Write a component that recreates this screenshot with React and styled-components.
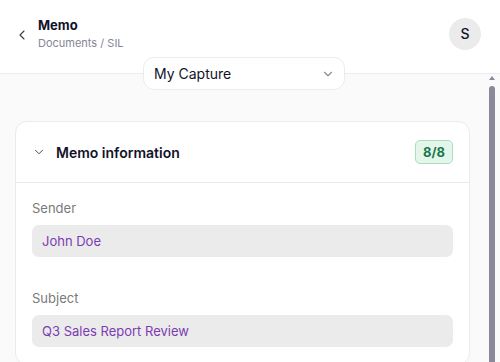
import styled, { createGlobalStyle } from "styled-components";
import { ChevronLeft, ChevronDown } from "lucide-react";

const GlobalStyle = createGlobalStyle`
  * { box-sizing: border-box; }
  html, body { margin: 0; padding: 0; }
  body {
    font-family: Inter, "Noto Sans", sans-serif;
    background: #fafafa;
    color: #14142b;
  }
`;

const Page = styled.div`
  height: 100vh;
  display: flex;
  flex-direction: column;
`;

const Header = styled.header`
  position: relative;
  height: 74px;
  flex-shrink: 0;
  background: #fff;
  border-bottom: 1px solid #ececec;
  display: flex;
  align-items: center;
  padding: 0 19px 6px 14px;
  z-index: 2;
`;

const BackButton = styled.button`
  all: unset;
  display: flex;
  align-items: center;
  color: #3a3a4a;
  margin-right: 8px;
  margin-top: 3px;
`;

const TitleBlock = styled.div`
  flex: 1;
  display: flex;
  flex-direction: column;
  gap: 3px;
`;

const Title = styled.h1`
  margin: 0;
  font-size: 13px;
  font-weight: 700;
  line-height: 16px;
  color: #12122a;
`;

const Crumbs = styled.span`
  font-size: 11px;
  line-height: 14px;
  color: #858596;
`;

const Avatar = styled.div`
  width: 32px;
  height: 32px;
  border-radius: 50%;
  background: #ebebeb;
  display: flex;
  align-items: center;
  justify-content: center;
  font-size: 14px;
  font-weight: 500;
  color: #12122a;
`;

const Select = styled.button`
  all: unset;
  position: absolute;
  left: 143px;
  bottom: -17px;
  width: 202px;
  height: 33px;
  box-sizing: border-box;
  background: #fff;
  border: 1px solid #ececec;
  border-radius: 11px;
  display: flex;
  align-items: center;
  justify-content: space-between;
  padding: 0 9px 0 10px;
  font-size: 14px;
  color: #12122a;
  svg { color: #8d8d99; }
`;

const Body = styled.div`
  flex: 1;
  min-height: 0;
  display: flex;
`;

const Scroll = styled.main`
  flex: 1;
  overflow-y: auto;
  padding: 47px 15px 0;
`;

const ScrollRail = styled.div`
  width: 15px;
  flex-shrink: 0;
  display: flex;
  flex-direction: column;
  padding: 2px 5px 0 4px;
  background: #fafafa;
`;

const ArrowUp = styled.div`
  width: 0;
  height: 0;
  border-left: 3px solid transparent;
  border-right: 3px solid transparent;
  border-bottom: 4px solid #8a889b;
  margin-bottom: 6px;
`;

const Thumb = styled.div`
  flex: 1;
  width: 6px;
  background: #8a889b;
  border-radius: 3px 3px 0 0;
`;

const Card = styled.section`
  background: #fff;
  border: 1px solid #ebebeb;
  border-radius: 12px;
`;

const CardHead = styled.div`
  height: 61px;
  display: flex;
  align-items: center;
  gap: 10px;
  padding: 0 16px 0 16px;
  border-bottom: 1px solid #ebebeb;
  svg { color: #3a3a4a; }
`;

const CardTitle = styled.h2`
  margin: 0;
  flex: 1;
  font-size: 14px;
  font-weight: 600;
  color: #12122a;
`;

const Badge = styled.span`
  height: 24px;
  padding: 0 7px;
  display: flex;
  align-items: center;
  border-radius: 5px;
  background: #e4f6ea;
  border: 1px solid #a9dfbd;
  color: #17784a;
  font-size: 13px;
  font-weight: 700;
`;

const CardBody = styled.div`
  padding: 16px 16px 17px;
  display: flex;
  flex-direction: column;
  gap: 32px;
`;

const Field = styled.div`
  display: flex;
  flex-direction: column;
  gap: 8px;
`;

const Label = styled.label`
  font-size: 13px;
  line-height: 18px;
  color: #7a7a7a;
`;

const Value = styled.div`
  height: 32px;
  display: flex;
  align-items: center;
  padding: 0 10px;
  border-radius: 7px;
  background: #ebebeb;
  font-size: 13px;
  color: #7b3cb3;
`;

const fields = [
  { label: "Sender", value: "John Doe" },
  { label: "Subject", value: "Q3 Sales Report Review" },
];

export default function App() {
  return (
    <>
      <GlobalStyle />
      <Page>
        <Header>
          <BackButton>
            <ChevronLeft size={16} strokeWidth={1.6} />
          </BackButton>
          <TitleBlock>
            <Title>Memo</Title>
            <Crumbs>Documents / SIL</Crumbs>
          </TitleBlock>
          <Avatar>S</Avatar>
          <Select>
            My Capture
            <ChevronDown size={14} strokeWidth={2} />
          </Select>
        </Header>
        <Body>
          <Scroll>
            <Card>
              <CardHead>
                <ChevronDown size={14} strokeWidth={1.6} />
                <CardTitle>Memo information</CardTitle>
                <Badge>8/8</Badge>
              </CardHead>
              <CardBody>
                {fields.map((f) => (
                  <Field key={f.label}>
                    <Label>{f.label}</Label>
                    <Value>{f.value}</Value>
                  </Field>
                ))}
              </CardBody>
            </Card>
          </Scroll>
          <ScrollRail aria-hidden="true">
            <ArrowUp />
            <Thumb />
          </ScrollRail>
        </Body>
      </Page>
    </>
  );
}
